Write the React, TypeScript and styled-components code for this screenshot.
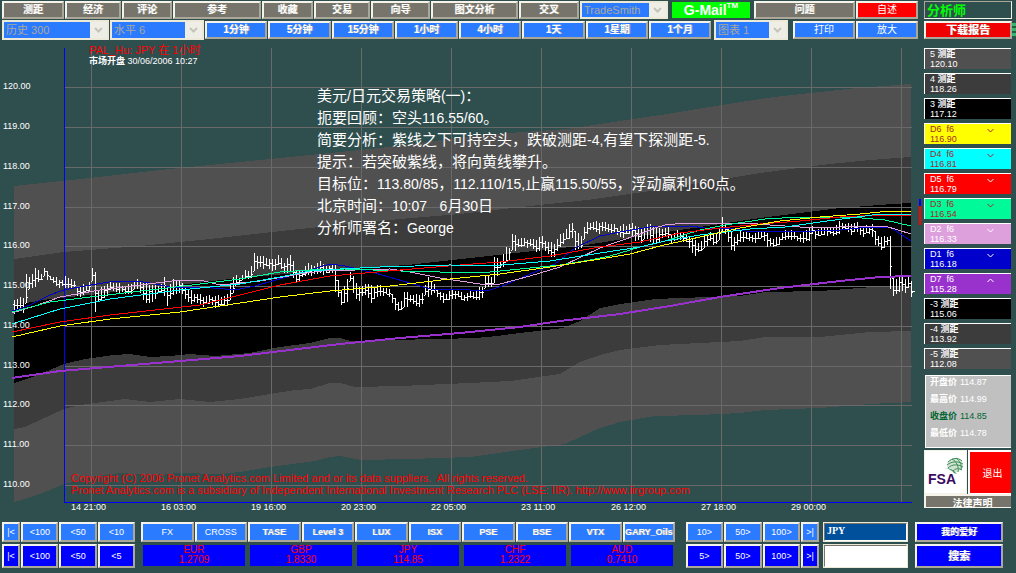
import React from 'react';
import styled, { createGlobalStyle } from 'styled-components';

const sans = '"Liberation Sans", "Noto Sans CJK SC", sans-serif';

const GlobalStyle = createGlobalStyle`
  * { box-sizing: border-box; }
  body {
    margin: 0;
    background: #2f4f4f;
    color: #fff;
    font-family: ${sans};
    font-size: 9px;
  }
  button, input, select { font-family: inherit; margin: 0; border-radius: 0; }
`;

const Page = styled.div`
  min-width: 900px;
  padding-top: 1px;
  overflow: hidden;
`;

const Workspace = styled.main`
  display: grid;
  grid-template-columns: minmax(0, 1fr) 92px;
  column-gap: 6px;
  padding-left: 2px;
`;

const MainColumn = styled.div`
  min-width: 0;
`;

const Toolbar = styled.div<{ $tracks: number[]; $height: number }>`
  display: grid;
  grid-template-columns: ${(p) => p.$tracks.map((t) => `minmax(0, ${t}fr)`).join(' ')};
  gap: 1px;
  align-items: center;
  height: ${(p) => p.$height}px;
  margin-bottom: 1px;
`;

const Button = styled.button<{ $bg: string; $size?: number; $plain?: boolean; $endGap?: number; $height?: number }>`
  display: flex;
  align-items: center;
  justify-content: center;
  min-width: 0;
  height: ${(p) => p.$height ?? 18}px;
  margin-right: ${(p) => p.$endGap ?? 0}px;
  padding: 0;
  overflow: hidden;
  white-space: nowrap;
  border: 2px solid;
  border-color: #f6f4ea #aca899 #aca899 #f6f4ea;
  background: ${(p) => p.$bg};
  color: #fff;
  font-size: ${(p) => p.$size ?? 10}px;
  line-height: 12px;
  font-weight: ${(p) => (p.$plain ? 400 : 700)};
  text-shadow: ${(p) => (p.$plain ? 'none' : '1px 0 #aca899')};
`;

const MailLink = styled.a`
  display: flex;
  justify-content: center;
  height: 16px;
  margin-right: 3px;
  background: #00ff00;
  color: #fff;
  font-size: 14px;
  font-weight: 700;
  line-height: 16px;
  text-decoration: none;

  sup { font-size: 8px; line-height: 8px; }
`;

const SelectBox = styled.label<{ $height: number; $endGap?: number }>`
  position: relative;
  display: block;
  height: ${(p) => p.$height}px;
  margin-right: ${(p) => p.$endGap ?? 0}px;
`;

const Select = styled.select`
  display: block;
  appearance: none;
  width: 100%;
  height: 100%;
  padding: 0 0 0 2px;
  border: 2px solid #ece9d8;
  background: #2a7bff;
  color: #aca899;
  font-size: 11px;
  line-height: 12px;
`;

const SelectArrow = styled.span`
  position: absolute;
  top: 2px;
  right: 2px;
  bottom: 2px;
  display: grid;
  place-items: center;
  width: 17px;
  background: #efeee6;
  pointer-events: none;
`;

function DropDown({ label, value, height, endGap }: { label: string; value: string; height: number; endGap?: number }) {
  return (
    <SelectBox $height={height} $endGap={endGap}>
      <Select aria-label={label} defaultValue={value}>
        <option>{value}</option>
      </Select>
      <SelectArrow>
        <svg width="9" height="6" viewBox="0 0 9 6" aria-hidden="true">
          <path d="M1 1l3.500 3.500L8 1" fill="none" stroke="#c6c4b8" strokeWidth="2" />
        </svg>
      </SelectArrow>
    </SelectBox>
  );
}

/* ---------- chart ---------- */

const ChartArea = styled.section`
  position: relative;
`;

const ChartSvg = styled.svg`
  display: block;
  width: 100%;
  height: auto;
  overflow: visible;
  font-family: ${sans};
  font-size: 9px;
`;

const ChartTitle = styled.h1`
  position: absolute;
  top: 4px;
  left: 87px;
  margin: 0;
  font-size: 9px;
  font-weight: 400;
  line-height: 11px;

  span { display: block; white-space: nowrap; }
  span:first-child { color: #ff0000; font-size: 11px; }
`;

const Strategy = styled.div`
  position: absolute;
  top: 44px;
  left: 315px;
  font-size: 15px;
  line-height: 22px;

  p { margin: 0; white-space: pre; }
  span { font-size: 14px; }
`;

const Copyright = styled.div`
  position: absolute;
  left: 69px;
  bottom: 19px;
  color: #ff0000;
  font-size: 11px;
  line-height: 12px;
  white-space: pre;

  p { margin: 0; }
`;

type Pt = [number, number];

const upperBand: Pt[] = [[14,186],[90,178],[160,170],[230,163],[300,156],[380,148],[480,135],[567,129],[620,121],[667,114],[697,109],[760,99],[783,96],[857,88],[911,84]];
const upperMid: Pt[] = [[14,259],[64,252],[140,246],[200,240],[300,229],[400,219],[460,214],[530,206],[587,200],[650,191],[700,183],[760,173],[830,164],[870,160],[911,157]];
const coreTop: Pt[] = [[14,305],[50,299],[90,295],[130,290],[180,285],[230,279],[330,270],[407,265],[497,255],[580,246],[660,233],[700,227],[760,218],[840,208],[893,204],[911,203]];
const coreBottom: Pt[] = [[14,383],[30,378],[50,370],[64,364],[85,359],[113,355],[130,354],[150,357],[170,356],[190,354],[215,356],[250,353],[280,347],[310,343],[330,338],[340,338],[351,341],[390,340],[440,339],[475,338],[497,336],[520,333],[563,328],[580,321],[600,308],[620,304],[655,299],[680,298],[740,296],[765,292],[820,291],[860,288],[885,286],[911,286]];
const lowerMid: Pt[] = [[14,429],[25,427],[40,420],[64,409],[80,405],[110,401],[125,399],[150,402],[180,399],[210,402],[240,399],[270,394],[295,390],[310,389],[330,383],[340,383],[355,387],[400,386],[470,383],[510,381],[560,374],[580,362],[600,355],[620,350],[660,345],[700,343],[740,341],[765,337],[820,337],[870,332],[911,331]];
const lowerBand: Pt[] = [[14,502],[22,500],[45,492],[64,484],[90,477],[120,473],[150,475],[180,473],[220,474],[240,472],[270,467],[300,463],[315,461],[330,457],[340,456],[360,460],[410,459],[470,457],[520,450],[565,444],[580,437],[600,428],[620,422],[655,416],[700,415],[740,413],[765,410],[820,408],[870,404],[911,402]];

const averages: { color: string; width: number; points: Pt[] }[] = [
  { color: '#0000cd', width: 1, points: [[12,311],[30,305],[50,295],[64,290],[85,286],[115,281],[135,281],[150,283],[170,287],[200,287],[225,289],[240,289],[255,286],[290,276],[310,270],[330,264],[345,266],[375,273],[410,283],[430,289],[470,290],[490,290],[505,285],[530,274],[555,264],[575,248],[600,236],[620,232],[650,227],[690,226],[705,228],[730,228],[745,231],[790,232],[840,230],[860,228],[890,227],[911,241]] },
  { color: '#dda0dd', width: 1, points: [[12,313],[35,306],[60,297],[100,290],[140,285],[180,280],[200,280],[220,285],[260,281],[300,274],[330,270],[355,270],[390,269],[410,272],[440,278],[480,284],[500,284],[530,276],[560,267],[600,248],[640,234],[655,228],[665,225],[685,223],[745,223],[770,225],[800,227],[840,227],[860,226],[885,226],[911,234]] },
  { color: '#00fa9a', width: 1, points: [[12,312],[50,302],[90,297],[150,290],[200,284],[240,279],[280,272],[310,270],[345,269],[400,271],[440,272],[490,272],[520,269],[560,265],[590,260],[610,256],[640,247],[665,241],[700,230],[725,225],[765,219],[800,217],[850,217],[885,220],[911,226]] },
  { color: '#ff0000', width: 1, points: [[12,332],[60,322],[110,315],[200,305],[240,295],[280,285],[330,276],[400,270],[460,265],[500,262],[550,256],[600,247],[640,242],[680,233],[720,228],[760,224],[800,221],[840,217],[880,215],[911,215]] },
  { color: '#00ffff', width: 1, points: [[12,324],[60,309],[110,299],[180,290],[240,284],[280,277],[310,271],[340,269],[380,267],[450,265],[490,266],[550,261],[600,253],[640,247],[665,241],[700,235],[750,229],[785,227],[820,222],[850,218],[880,214],[911,215]] },
  { color: '#ffff00', width: 1, points: [[12,337],[60,326],[110,319],[180,312],[240,303],[280,297],[330,291],[390,286],[450,279],[500,274],[550,267],[600,259],[630,254],[660,246],[700,237],[740,228],[780,221],[820,217],[860,214],[890,211],[911,211]] },
  { color: '#9932cc', width: 2, points: [[12,378],[60,371],[180,361],[240,356],[340,344],[400,338],[460,333],[520,327],[560,321],[620,314],[670,306],[720,297],[780,288],[840,281],[880,277],[911,276]] },
];

/* x, high, low */
const priceKeys: [number, number, number][] = [
  [14,300,315],[20,299,309],[24,297,312],[26,275,304],[29,279,289],[35,269,285],[41,274,280],[44,269,275],[50,276,281],[56,279,285],[62,281,287],[66,277,288],[72,280,285],[78,288,298],[84,286,292],[89,283,291],[92,270,280],[95,272,310],[98,292,303],[104,286,297],[110,283,291],[118,284,291],[124,287,294],[130,285,293],[136,281,288],[140,281,292],[146,284,304],[150,285,303],[156,287,296],[161,285,292],[164,279,295],[167,288,304],[173,281,295],[179,281,291],[185,288,299],[191,292,302],[197,295,303],[203,297,305],[212,297,304],[218,297,307],[224,297,305],[228,295,303],[231,278,300],[235,277,285],[240,278,282],[245,272,279],[250,271,277],[254,255,272],[260,257,266],[266,258,267],[272,261,270],[278,256,266],[284,263,272],[289,256,270],[293,261,278],[297,274,282],[303,269,277],[309,264,273],[315,267,275],[320,261,272],[325,267,274],[332,266,272],[335,267,290],[341,292,305],[346,285,300],[348,273,300],[350,273,282],[354,279,297],[360,290,299],[366,283,294],[372,288,302],[378,286,296],[384,288,294],[390,291,298],[396,300,310],[399,306,313],[404,293,306],[410,295,303],[416,296,305],[422,294,305],[425,287,295],[428,277,296],[432,284,292],[438,291,298],[444,296,302],[450,291,299],[456,291,297],[462,295,301],[468,294,299],[474,292,299],[480,288,298],[483,287,299],[485,277,288],[492,277,284],[494,258,284],[500,261,267],[506,249,263],[511,247,258],[512,235,249],[518,239,248],[525,240,245],[530,240,247],[535,241,251],[541,237,248],[547,243,252],[554,244,258],[558,238,248],[564,232,241],[572,223,237],[576,235,251],[582,236,247],[585,224,233],[593,223,230],[600,223,232],[606,224,231],[612,225,232],[618,228,236],[624,226,236],[630,225,234],[636,226,240],[641,231,243],[646,225,235],[651,226,245],[656,228,242],[660,230,240],[667,228,235],[672,235,243],[678,231,239],[684,235,240],[690,237,250],[696,243,255],[702,242,250],[705,235,245],[710,233,242],[714,235,246],[718,233,240],[722,219,232],[726,224,234],[730,233,247],[734,237,252],[738,234,242],[744,232,239],[750,236,241],[756,234,241],[762,230,237],[768,236,246],[772,240,247],[778,238,244],[784,232,240],[790,230,237],[796,236,241],[802,234,241],[808,228,243],[812,228,233],[816,231,238],[822,228,234],[828,229,234],[834,228,236],[840,222,231],[846,225,230],[852,224,234],[856,223,231],[862,228,235],[868,226,233],[872,225,236],[876,235,245],[882,238,251],[886,237,243],[889,237,243],[890,237,290],[893,280,296],[899,277,290],[905,279,293],[908,276,287],[911,283,295],
];

function priceAt(x: number) {
  let i = 1;
  while (i < priceKeys.length - 1 && priceKeys[i][0] < x) i += 1;
  const [x0, h0, l0] = priceKeys[i - 1];
  const [x1, h1, l1] = priceKeys[i];
  const t = Math.min(1, Math.max(0, (x - x0) / (x1 - x0)));
  return { high: Math.round(h0 + (h1 - h0) * t), low: Math.round(l0 + (l1 - l0) * t) };
}

function buildBars() {
  let d = '';
  let prev = 304;
  for (let n = 0; n < 300; n += 1) {
    const x = 14 + n * 3;
    const { high, low } = priceAt(x);
    const top = high - ((n * 7) % 3);
    const bottom = low + ((n * 5) % 4) - 1;
    const close = Math.round(high + (low - high) * (0.35 + ((n * 11) % 5) * 0.1));
    const open = Math.min(bottom, Math.max(top, prev));
    d += `M${x} ${top}h1V${bottom}h-1zM${x - 1} ${open}h1v1h-1zM${x + 1} ${close}h1v1h-1z`;
    prev = close;
  }
  return d;
}

const bars = buildBars();
const join = (pts: Pt[]) => pts.map((p) => p.join(',')).join(' ');
const area = (top: Pt[], bottom: Pt[]) => join([...top, ...[...bottom].reverse()]);

const levels: [string, number][] = [['120.00',87],['119.00',127],['118.00',167],['117.00',207],['116.00',246],['115.00',286],['114.00',326],['113.00',366],['112.00',405],['111.00',445],['110.00',485]];
const times: [string, number][] = [['14 21:00',91],['16 03:00',181],['19 16:00',271],['20 23:00',361],['22 05:00',451],['23 11:00',541],['26 12:00',631],['27 18:00',721],['29 00:00',811],['',901]];

const strategy = [
  '美元/日元交易策略(一)：',
  '扼要回顾：空头116.55/60。',
  '简要分析：紫线之下可持空头，跌破测距-4,有望下探测距-5.',
  '提示：若突破紫线，将向黄线攀升。',
  '目标位：113.80/85，112.110/15,止赢115.50/55，浮动赢利160点。',
  '北京时间：10:07   6月30日',
  '分析师署名：George',
];

function Chart() {
  return (
    <ChartArea>
      <ChartSvg viewBox="2 41 916 474" role="img" aria-label="JPY 1小时">
        <g shapeRendering="crispEdges">
          <polygon points={area(upperBand, upperMid)} fill="#505050" />
          <polygon points={area(upperMid, coreTop)} fill="#3c3c3c" />
          <polygon points={area(coreTop, coreBottom)} fill="#000" />
          <polygon points={area(coreBottom, lowerMid)} fill="#3c3c3c" />
          <polygon points={area(lowerMid, lowerBand)} fill="#505050" />
          {levels.map(([label, y]) => <rect key={label} x="64" y={y} width="848" height="1" fill="#696969" />)}
          {times.map(([label, x]) => <rect key={x} x={x} y="48" width="1" height="455" fill="#696969" />)}
          <path d="M64 48h1v454h847v1H64z" fill="#0000ff" />
          <path d={bars} fill="#fff" />
          <rect x="912" y="291" width="3" height="1" fill="#fff" />
          {averages.map((a) => (
            <polyline key={a.color} points={join(a.points)} fill="none" stroke={a.color} strokeWidth={a.width} />
          ))}
          <rect x="919" y="199" width="2" height="7" fill="#0000ff" />
          <rect x="919" y="206" width="2" height="19" fill="#ff0000" />
        </g>
        {levels.map(([label, y]) => <text key={label} x="3" y={y + 2} fill="#fff">{label}</text>)}
        {times.map(([label, x]) => <text key={x} x={x - 20} y="510" fill="#fff">{label}</text>)}
      </ChartSvg>
      <ChartTitle>
        <span>PAL_Hu: JPY 在 1小时</span>
        <span><b>市场开盘</b> 30/06/2006 10:27</span>
      </ChartTitle>
      <Strategy>
        {strategy.map((line) => (
          <p key={line}>
            {line.split(/([\x21-\x7e]+)/).map((part, i) => (i % 2 ? <span key={i}>{part}</span> : part))}
          </p>
        ))}
      </Strategy>
      <Copyright>
        <p>Copyright (C) 2006 Pronet Analytics.com Limited and or its data suppliers.  All rights reserved.</p>
        <p>Pronet Analytics.com is a subsidiary of Independent International Investment Research PLC (LSE: IIR). http://www.iirgroup.com</p>
      </Copyright>
    </ChartArea>
  );
}

/* ---------- side column ---------- */

const SideColumn = styled.aside`
  display: flex;
  flex-direction: column;
  min-width: 0;
`;

const Analyst = styled.div`
  display: flex;
  align-items: center;
  height: 18px;
  margin: 0 4px 2px 0;
  padding: 1px 0 0 2px;
  border: 1px solid;
  border-color: #aca899 #f6f4ea #f6f4ea #aca899;
  color: #00ff00;
  font-size: 13px;
  font-weight: 700;
  line-height: 14px;
`;

const ReportRow = styled.div`
  display: grid;
  grid-template-columns: 88px 4px;
  align-items: center;
`;

const Sliver = styled.span`
  height: 14px;
  background: repeating-linear-gradient(#3cb371 0 3px, #1f5f3c 3px 5px);
`;

const LevelList = styled.ul`
  display: flex;
  flex-direction: column;
  gap: 4px;
  margin: 9px 5px 0 0;
  padding: 0;
  list-style: none;
`;

const LevelItem = styled.li<{ $bg: string; $ink: string }>`
  display: flex;
  justify-content: space-between;
  height: 21px;
  padding: 0 17px 0 5px;
  border: solid #fff;
  border-width: 1px 0 0 1px;
  background: ${(p) => p.$bg};
  color: ${(p) => p.$ink};
  line-height: 10px;
  white-space: pre;

  b { font-size: 9px; }
  svg { margin-top: 4px; }
`;

const Quote = styled.dl`
  display: flex;
  flex-direction: column;
  gap: 7px;
  height: 73px;
  margin: 6px 5px 0 1px;
  padding: 1px 0 0 4px;
  border: 1px solid #fff;
  border-right: 0;
  background: #c0c0c0;
`;

const QuoteRow = styled.div<{ $strong?: boolean }>`
  display: flex;
  gap: 3px;
  color: ${(p) => (p.$strong ? '#006633' : '#fff')};
  line-height: 10px;

  dt { font-weight: 700; }
  dd { margin: 0; }
`;

const ExitRow = styled.div`
  display: grid;
  grid-template-columns: 1fr 1fr;
  gap: 1px;
  height: 42px;
  margin: 2px 5px 2px 0;
`;

const LogoLink = styled.a`
  display: block;
  border: 1px solid #f4f2e4;
  background: #fff;
`;

const ExitButton = styled.button`
  padding: 0 0 0 4px;
  border: solid #fff;
  border-width: 2px 0 1px 2px;
  background: #ff0000;
  color: #fff;
  font-size: 10px;
`;

const LegalButton = styled.button`
  height: 14px;
  margin-right: 5px;
  padding: 2px 0 0 8px;
  overflow: hidden;
  border: solid #f6f4ea;
  border-width: 2px 0 1px 2px;
  background: #77756b;
  color: #fff;
  font-size: 10px;
  font-weight: 700;
  line-height: 12px;
`;

const rows: { name: string; cn?: boolean; value: string; bg: string; ink: string; arrow?: 'down' | 'up' }[] = [
  { name: '5', cn: true, value: '120.10', bg: '#505050', ink: '#fff' },
  { name: '4', cn: true, value: '118.26', bg: '#3c3c3c', ink: '#fff' },
  { name: '3', cn: true, value: '117.12', bg: '#000', ink: '#fff' },
  { name: 'D6  f6', value: '116.90', bg: '#ffff00', ink: '#a52a2a', arrow: 'down' },
  { name: 'D4  f6', value: '116.81', bg: '#00ffff', ink: '#a52a2a', arrow: 'down' },
  { name: 'D5  f6', value: '116.79', bg: '#ff0000', ink: '#fff', arrow: 'down' },
  { name: 'D3  f6', value: '116.54', bg: '#00fa9a', ink: '#a52a2a', arrow: 'down' },
  { name: 'D2  f6', value: '116.33', bg: '#dda0dd', ink: '#fff', arrow: 'down' },
  { name: 'D1  f6', value: '116.18', bg: '#0000cd', ink: '#fff', arrow: 'down' },
  { name: 'D7  f6', value: '115.28', bg: '#9932cc', ink: '#fff', arrow: 'up' },
  { name: '-3', cn: true, value: '115.06', bg: '#000', ink: '#fff' },
  { name: '-4', cn: true, value: '113.92', bg: '#3c3c3c', ink: '#fff' },
  { name: '-5', cn: true, value: '112.08', bg: '#505050', ink: '#fff' },
];

function FsaLogo() {
  return (
    <svg width="41" height="40" viewBox="0 0 41 40" role="img" aria-label="FSA">
      <ellipse cx="30" cy="14" rx="8" ry="7" fill="#cfe3d2" />
      <g fill="none" stroke="#3f8f57" strokeWidth="1">
        <path d="M23 11c4-4 10-5 14-1M22 14c5-4 11-4 16-1M23 17c4-4 10-4 15-1M28 20c3-3 6-3 9-1" />
        <path d="M27 8c5 3 7 8 6 13M31 7c4 3 6 7 5 12" />
      </g>
      <path d="M20 17c5 0 9 2 12 6l-3-1c-2-3-5-4-9-5z" fill="#3f8f57" />
      <text x="3" y="33" fill="#3b0a63" fontSize="14" fontWeight="700" fontFamily={sans}>FSA</text>
    </svg>
  );
}

function Side() {
  return (
    <SideColumn>
      <Analyst>分析师</Analyst>
      <ReportRow>
        <Button $bg="#f00000" $size={11}>下载报告</Button>
        <Sliver />
      </ReportRow>
      <LevelList>
        {rows.map((r) => (
          <LevelItem key={r.name} $bg={r.bg} $ink={r.ink}>
            <span>
              {r.name}{r.cn && <> <b>测距</b></>}<br />{r.value}
            </span>
            {r.arrow && (
              <svg width="7" height="5" viewBox="0 0 7 5" aria-hidden="true">
                <path d={r.arrow === 'down' ? 'M0.500 1l3 3 3-3' : 'M0.500 4l3-3 3 3'} fill="none" stroke={r.ink} />
              </svg>
            )}
          </LevelItem>
        ))}
      </LevelList>
      <Quote>
        <QuoteRow><dt>开盘价</dt><dd>114.87</dd></QuoteRow>
        <QuoteRow><dt>最高价</dt><dd>114.99</dd></QuoteRow>
        <QuoteRow $strong><dt>收盘价</dt><dd>114.85</dd></QuoteRow>
        <QuoteRow><dt>最低价</dt><dd>114.78</dd></QuoteRow>
      </Quote>
      <ExitRow>
        <LogoLink href="#fsa"><FsaLogo /></LogoLink>
        <ExitButton>退出</ExitButton>
      </ExitRow>
      <LegalButton>法律声明</LegalButton>
    </SideColumn>
  );
}

/* ---------- footer ---------- */

const Footer = styled.footer`
  display: grid;
  grid-template-columns: minmax(0, 133fr) minmax(0, 536fr) minmax(0, 140fr) minmax(0, 85fr) minmax(0, 91fr);
  gap: 4px;
  margin-top: 7px;
  padding: 0 13px 5px 2px;
`;

const FooterGroup = styled.div<{ $indent?: number }>`
  display: flex;
  flex-direction: column;
  gap: 2px;
  min-width: 0;
  margin-left: ${(p) => p.$indent ?? 0}px;
`;

const Strip = styled.div<{ $tracks: string; $gap?: number; $inset?: number }>`
  display: grid;
  grid-template-columns: ${(p) => p.$tracks};
  gap: ${(p) => p.$gap ?? 1}px;
  padding: 0 ${(p) => p.$inset ?? 0}px;
`;

const Ticker = styled.div`
  height: 21px;
  margin-top: 1px;
  background: #0000ff;
  color: #ff0000;
  font-size: 10px;
  line-height: 10px;
  text-align: center;
`;

const Entry = styled.input<{ $bg: string; $height: number }>`
  width: 100%;
  height: ${(p) => p.$height}px;
  padding: 0 2px 4px;
  border: 2px solid;
  border-color: #77756b #fff #fff #77756b;
  outline: 1px solid #ece9d8;
  outline-offset: -1px;
  background: ${(p) => p.$bg};
  color: #fff;
  font-family: "Liberation Serif", serif;
  font-size: 10px;
  font-weight: 700;
`;

const light = '#2a7bff';
const deep = '#0000ff';
const grey = '#77756b';

function NavGroup({ top, bottom, tracks, indent }: { top: string[]; bottom: string[]; tracks: string; indent?: number }) {
  return (
    <FooterGroup $indent={indent}>
      <Strip $tracks={tracks}>
        {top.map((t) => <Button key={t} $bg={light} $size={9} $height={20} $plain>{t}</Button>)}
      </Strip>
      <Strip $tracks={tracks}>
        {bottom.map((t) => <Button key={t} $bg={deep} $size={9} $height={24} $plain>{t}</Button>)}
      </Strip>
    </FooterGroup>
  );
}

const markets = ['FX', 'CROSS', 'TASE', 'Level 3', 'LUX', 'ISX', 'PSE', 'BSE', 'VTX', 'GARY_Oils'];
const rates = [['EUR', '1.2709'], ['GBP', '1.8330'], ['JPY', '114.85'], ['CHF', '1.2322'], ['AUD', '0.7410']];

export default function App() {
  return (
    <>
      <GlobalStyle />
      <Page>
        <Workspace>
          <MainColumn>
            <Toolbar $height={18} $tracks={[62, 56, 50, 88, 51, 56, 59, 87, 60, 91, 81, 101, 62]}>
              {['测距', '经济', '评论', '参考', '收藏', '交易', '向导', '图文分析', '交叉'].map((t) => (
                <Button key={t} $bg={grey}>{t}</Button>
              ))}
              <DropDown label="TradeSmith" value="TradeSmith" height={18} endGap={3} />
              <MailLink href="#mail">G-Mail<sup>TM</sup></MailLink>
              <Button $bg={grey}>问题</Button>
              <Button $bg="#ff0000" $plain>自述</Button>
            </Toolbar>
            <Toolbar $height={20} $tracks={[107, 94, 62, 63, 62, 63, 62, 63, 62, 64, 78, 62, 62]}>
              <DropDown label="历史" value="历史 300" height={20} />
              <DropDown label="水平" value="水平 6" height={20} />
              {['1分钟', '5分钟', '15分钟', '1小时', '4小时', '1天', '1星期'].map((t) => (
                <Button key={t} $bg={light}>{t}</Button>
              ))}
              <Button $bg={light} $endGap={2}>1个月</Button>
              <DropDown label="图表" value="图表 1" height={20} endGap={4} />
              <Button $bg={light} $plain>打印</Button>
              <Button $bg={light} $plain>放大</Button>
            </Toolbar>
            <Chart />
          </MainColumn>
          <Side />
        </Workspace>
        <Footer>
          <NavGroup tracks="18fr 37fr 37fr 37fr" top={['|<', '<100', '<50', '<10']} bottom={['|<', '<100', '<50', '<5']} />
          <FooterGroup $indent={2}>
            <Strip $tracks="repeat(10, minmax(0, 1fr))">
              {markets.map((m, i) => <Button key={m} $bg={light} $size={9} $height={20} $plain={i < 2}>{m}</Button>)}
            </Strip>
            <Strip $tracks="repeat(5, minmax(0, 1fr))" $gap={5} $inset={2}>
              {rates.map(([name, rate]) => <Ticker key={name}>{name}<br />{rate}</Ticker>)}
            </Strip>
          </FooterGroup>
          <NavGroup indent={7} tracks="37fr 38fr 37fr 18fr" top={['10>', '50>', '100>', '>|']} bottom={['5>', '50>', '100>', '>|']} />
          <FooterGroup>
            <Entry aria-label="代码" $bg="#00509b" $height={20} defaultValue="JPY" />
            <Entry aria-label="搜索内容" $bg="#fff" $height={24} />
          </FooterGroup>
          <FooterGroup $indent={3}>
            <Button $bg={deep} $size={9} $height={20}>我的爱好</Button>
            <Button $bg={deep} $size={11} $height={24}>搜索</Button>
          </FooterGroup>
        </Footer>
      </Page>
    </>
  );
}
